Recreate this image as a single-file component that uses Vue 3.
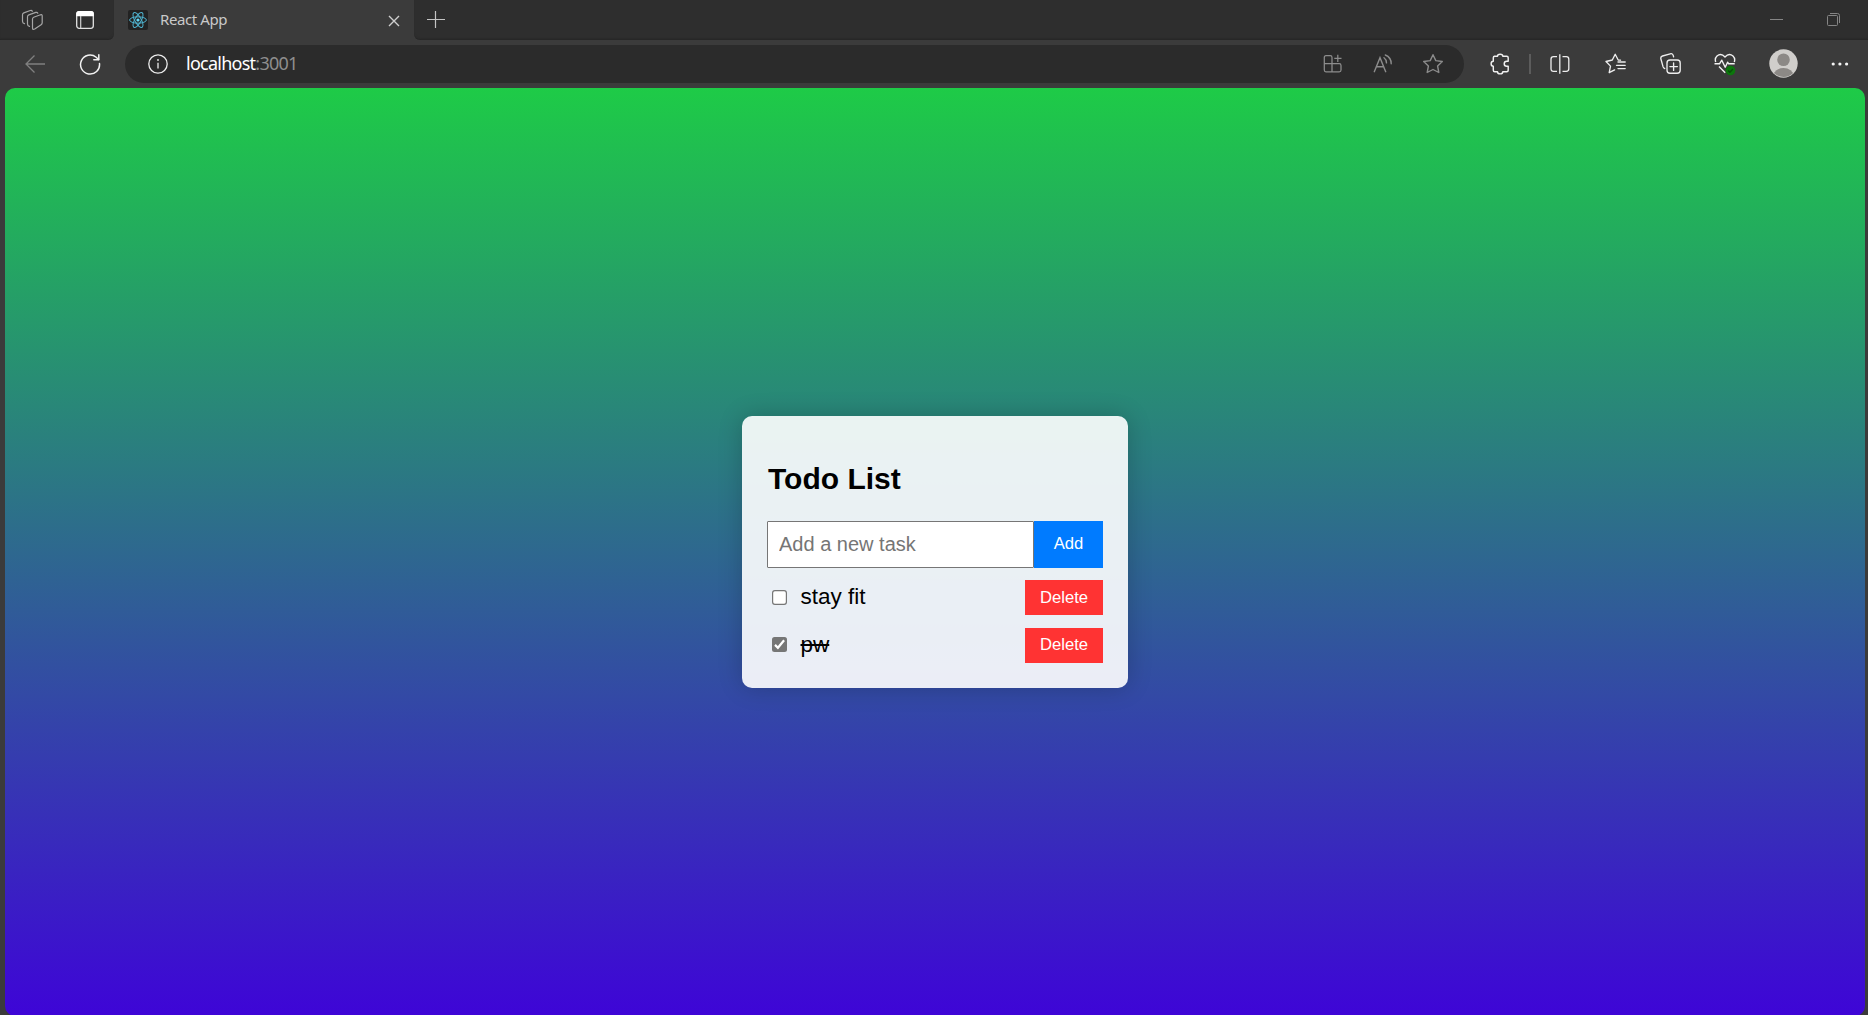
<script setup>
import { ref } from 'vue'

const draft = ref('')
const tasks = ref([
  { id: 1, text: 'stay fit', done: false },
  { id: 2, text: 'pw', done: true },
])

function add() {
  const text = draft.value.trim()
  if (!text) return
  tasks.value.push({ id: Date.now(), text, done: false })
  draft.value = ''
}
function remove(id) {
  tasks.value = tasks.value.filter((t) => t.id !== id)
}
</script>

<template>
  <div class="browser">
    <header class="titlebar">
      <div class="strip left">
        <svg class="workspaces" width="24" height="22" viewBox="0 0 24 22" fill="none" stroke="#a6a6a6" stroke-width="1.2" stroke-linejoin="round" stroke-linecap="round">
          <path d="M12.500 10q0-1.300 1.200-1.800l6.800-2.400q1.700-.5 1.700 1.200v6.700q0 1.300-1.100 2l-6.400 4.300q-2.200 1.200-2.200-1z" />
          <path d="M9.500 17.300q-2-.3-2-2.300V7.800q0-1.400 1.300-1.900l7-2.500q1.500-.4 2 .8" />
          <path d="M4.500 14.600q-2-.3-2-2.300V5.800q0-1.400 1.300-1.900l6.500-2.400q1.500-.4 2 .8" />
        </svg>
        <svg class="tabmenu" width="20" height="20" viewBox="0 0 20 20">
          <rect x="1.700" y="1.700" width="16.600" height="16.600" rx="2.500" fill="none" stroke="#e2e2e2" stroke-width="1.300" />
          <path d="M1.200 6.200V3.800Q1.200 1 4 1h12q2.800 0 2.800 2.800v2.400z" fill="#fff" />
          <path d="M5.700 6v12" stroke="#d0d0d0" stroke-width="1.200" />
        </svg>
      </div>
      <div class="tab">
        <svg class="favicon" width="20" height="20" viewBox="0 0 20 20">
          <rect width="20" height="20" rx="2" fill="#222" />
          <g fill="none" stroke="#4fb3cf" stroke-width="1">
            <ellipse cx="10" cy="10" rx="8.400" ry="3.200" />
            <ellipse cx="10" cy="10" rx="8.400" ry="3.200" transform="rotate(60 10 10)" />
            <ellipse cx="10" cy="10" rx="8.400" ry="3.200" transform="rotate(120 10 10)" />
          </g>
          <circle cx="10" cy="10" r="1.600" fill="#61dafb" />
        </svg>
        <span class="tab-title">React App</span>
        <svg class="close" width="12" height="12" viewBox="0 0 12 12" stroke="#cfcfcf" stroke-width="1.400"><path d="m1 1 10 10M11 1 1 11" /></svg>
      </div>
      <div class="strip right">
        <svg class="plus" width="18" height="18" viewBox="0 0 18 18" stroke="#c4c4c4" stroke-width="1.200"><path d="M0 8.500h18M8.500 0v17" /></svg>
        <svg class="minimize" width="13" height="13" viewBox="0 0 13 13"><path d="M0 6.500h13" stroke="#858585" /></svg>
        <svg class="restore" width="13" height="13" viewBox="0 0 13 13" fill="none" stroke="#858585"><rect x=".5" y="2.500" width="10" height="10" rx="1" /><path d="M3 .5h7.500q2 0 2 2V10" /></svg>
      </div>
    </header>

    <nav class="toolbar">
      <svg class="back" width="20" height="18" viewBox="0 0 20 18" fill="none" stroke="#808080" stroke-width="1.300"><path d="M20 9H1M9.500.500 1 9l8.500 8.500" /></svg>
      <svg class="reload" width="22" height="22" viewBox="0 0 22 22" fill="none" stroke="#f2f2f2" stroke-width="1.500" stroke-linecap="round" stroke-linejoin="round">
        <path d="M20.500 10.500a9.500 9.500 0 1 1-3.300-6.200l2.300 2.200" /><path d="M19.800 1.700v5h-5" />
      </svg>
      <div class="address">
        <svg class="info" width="20" height="20" viewBox="0 0 20 20" fill="none" stroke="#ececec" stroke-width="1.300"><circle cx="10" cy="10" r="9.200" /><path d="M10 8.700v5.800" /><circle cx="10" cy="6" r=".9" fill="#ececec" stroke="none" /></svg>
        <span class="url"><span class="host">localhost</span><span class="port">:3001</span></span>
        <svg class="apps" width="20" height="20" viewBox="0 0 20 20" fill="none" stroke="#8c8c8c" stroke-width="1.250">
          <path d="M9 9.700H1.300V3.500Q1.300 1.700 3 1.700h4.300Q9 1.700 9 3.500v14.300M9 9.700h7.200q1.800 0 1.800 1.800V16q0 1.800-1.800 1.800H3q-1.700 0-1.700-1.800V9.700M14.800.700v7.200M11.300 4.300h7.200" />
        </svg>
        <svg class="read" width="20" height="19" viewBox="0 0 20 19" fill="none" stroke="#8c8c8c" stroke-width="1.400" stroke-linecap="round">
          <path d="M1.300 17.700 7 3.700l5.700 14M3.400 12.800h7.300M11 3.700q2.500 1.800 2.500 5.200M12.300 1q6 2.500 5.900 8.700" />
        </svg>
        <svg class="fav" width="22" height="22" viewBox="0 0 22 22" fill="none" stroke="#8c8c8c" stroke-width="1.400" stroke-linejoin="round">
          <path d="m11 1.700 2.800 5.900 6.500.9-4.700 4.500 1.200 6.500-5.800-3-5.800 3 1.200-6.500-4.700-4.500 6.500-.9z" />
        </svg>
      </div>
      <svg class="puzzle" width="20" height="22" viewBox="0 0 20 22" fill="none" stroke="#f0f0f0" stroke-width="1.450" stroke-linejoin="round">
        <path d="M4.200 3.300h3.300C7.500.500 12.800.500 12.800 3.300h3.900q1.500 0 1.500 1.500v3.500h-1.500c-3.300 0-3.300 5 0 5h1.500v3.900q0 1.500-1.500 1.500h-3.900c0 2.900-5.300 2.900-5.300 0H4.800q-1.500 0-1.500-1.500v-3.900c-2.900 0-2.900-5 0-5V4.800q0-1.500 1.500-1.500z" />
      </svg>
      <span class="divider"></span>
      <svg class="split" width="20" height="20" viewBox="0 0 20 20" fill="none" stroke="#ededed" stroke-width="1.300">
        <path d="M7 17.300H3.500q-2.500 0-2.500-2.500V5.200q0-2.500 2.500-2.500H7M12.500 2.700h3.800q2.500 0 2.500 2.500v9.600q0 2.500-2.500 2.500h-3.800M9.800.300v19.400" />
      </svg>
      <svg class="starlist" width="21" height="21" viewBox="0 0 21 21" fill="none" stroke="#ededed" stroke-width="1.350" stroke-linejoin="round" stroke-linecap="round">
        <path d="M15.500 7.200l-2.300-.2-3-5.700L7.300 7 1 8.500l4.500 4.600-1.300 6.600 5.400-2.800M13 9h7.200M11.500 12.300h8.700M13 15.600h7.200" />
      </svg>
      <svg class="collections" width="21" height="21" viewBox="0 0 21 21" fill="none" stroke="#ededed" stroke-width="1.350" stroke-linejoin="round" stroke-linecap="round">
        <rect x="7" y="7" width="13.200" height="13.200" rx="3" /><path d="M13.600 9.900v7.500M9.900 13.600h7.500M4.700 15.500q-1.200-.4-1.600-1.600L.900 6Q.300 3.700 2.500 3l7.700-2.200q2.300-.6 3 1.600l.4 1.500" />
      </svg>
      <svg class="health" width="22" height="23" viewBox="0 0 22 23" fill="none" stroke="#f2f2f2" stroke-width="1.400" stroke-linejoin="round">
        <path d="M1.700 9Q.500 5.500 3 3q4-3.300 8 .900 4-4.200 8-.900Q21.500 5.500 20.300 9M.500 10.800h5l2.300-3.600 3.400 7 2.400-5 1.100 1.600h6M5 13.600l6.200 6.200" />
        <circle cx="16.500" cy="17.500" r="4.800" fill="#0c760c" stroke="none" /><path d="m14.200 17.600 1.700 1.600 3-3.100" stroke="#064e09" />
      </svg>
      <svg class="avatar" width="29" height="29" viewBox="0 0 29 29">
        <defs><clipPath id="avatar-clip"><circle cx="14.500" cy="14.500" r="13.500" /></clipPath></defs>
        <circle cx="14.500" cy="14.500" r="14.200" fill="#d0cecb" />
        <g clip-path="url(#avatar-clip)" fill="#8c8986"><circle cx="14.500" cy="10.700" r="6.300" /><ellipse cx="14.500" cy="26.500" rx="10" ry="7.500" /></g>
      </svg>
      <svg class="more" width="18" height="4" viewBox="0 0 18 4" fill="#f4f4f4"><circle cx="2.200" cy="2" r="1.600" /><circle cx="8.900" cy="2" r="1.600" /><circle cx="15.600" cy="2" r="1.600" /></svg>
    </nav>

    <main class="page">
      <section class="card">
        <h2>Todo List</h2>
        <form class="entry" @submit.prevent="add">
          <input v-model="draft" type="text" placeholder="Add a new task" />
          <button class="add" type="submit">Add</button>
        </form>
        <ul>
          <li v-for="task in tasks" :key="task.id">
            <label>
              <input v-model="task.done" type="checkbox" />
              <svg class="box" width="15" height="15" viewBox="0 0 15 15">
                <template v-if="task.done">
                  <rect width="15" height="15" rx="2.500" fill="#767676" />
                  <path d="m3 7.900 2.900 2.900 6.200-7.500" fill="none" stroke="#fff" stroke-width="2.200" />
                </template>
                <rect v-else x=".6" y=".6" width="13.800" height="13.800" rx="2.300" fill="#fff" stroke="#767676" stroke-width="1.200" />
              </svg>
              <span class="name" :class="{ done: task.done }">{{ task.text }}</span>
            </label>
            <button class="delete" type="button" @click="remove(task.id)">Delete</button>
          </li>
        </ul>
      </section>
    </main>
  </div>
</template>

<style>
body { margin: 0; overflow: hidden; background: #3b3b3b; }
</style>

<style scoped>
* { box-sizing: border-box; }
svg { display: block; flex: none; }
.browser {
  width: 1868px; height: 1015px; overflow: hidden;
  display: flex; flex-direction: column;
  background: #3b3b3b;
  font-family: "Liberation Sans", Arial, sans-serif;
}
.titlebar { display: flex; height: 40px; flex: none; }
.strip { background: #2e2e2e; display: flex; align-items: flex-start; box-shadow: inset 0 -2px 2px -1px #252525; }
.left { width: 114px; border-bottom-right-radius: 6px; }
.right { flex: 1; border-bottom-left-radius: 6px; }
.workspaces { margin: 9px 0 0 20px; }
.tabmenu { margin: 10px 0 0 31px; }
.tab { width: 300px; display: flex; align-items: flex-start; background: #3b3b3b; }
.favicon { margin: 10px 0 0 14px; }
.tab-title {
  width: 200px; margin: 8px 0 0 12px;
  font: 15px/22px "Noto Sans", sans-serif; letter-spacing: -0.4px; color: #c9c9c9; white-space: nowrap;
}
.close { margin: 15px 0 0 28px; }
.plus { margin: 11px 0 0 13px; }
.minimize { margin: 13px 0 0 auto; }
.restore { margin: 13px 28px 0 44px; }

.toolbar { height: 48px; flex: none; display: flex; align-items: center; padding-bottom: 1px; }
.back { margin-left: 25px; }
.reload { margin-left: 34px; }
.address {
  width: 1339px; height: 38px; margin-left: 24px; border-radius: 19px; background: #2b2b2b;
  display: flex; align-items: center;
}
.info { margin-left: 22.5px; }
.url { width: 1137px; margin: 0 0 2px 18.5px; font: 18px/24px "Noto Sans", sans-serif; letter-spacing: -0.75px; white-space: nowrap; }
.host { color: #fff; }
.port { color: #8e8e8e; }
.read { margin-left: 30px; }
.fav { margin-left: 29px; }
.puzzle { margin-left: 25.5px; }
.divider { width: 2px; height: 20px; margin-left: 19.5px; background: #5c5c5c; }
.split { margin-left: 18.5px; }
.starlist { margin-left: 35px; }
.collections { margin-left: 34px; }
.health { margin: 2px 0 0 33.5px; }
.avatar { margin-left: 32.5px; }
.more { margin-left: 33.5px; }

.page {
  height: 928px; flex: none; margin: 0 3px 0 5px; border-radius: 10px;
  background: linear-gradient(#1ecb47, #3e05d7);
  display: flex; justify-content: center; align-items: flex-start;
}
.card {
  width: 386px; height: 272px; margin-top: 328px; padding: 45px 25px 0;
  border-radius: 10px; background: rgba(255, 255, 255, 0.9);
  box-shadow: 0 0 25px rgba(0, 0, 0, 0.2);
}
h2 { margin: 0 0 0 1px; font-size: 30px; line-height: 36px; color: #000; }
.entry { display: flex; height: 47px; margin-top: 24px; }
.entry input {
  width: 267px; height: 47px; padding: 0 11px; border: 1px solid #767676; border-radius: 1px;
  background: #fff; font: 20px "Liberation Sans", Arial, sans-serif; outline: none;
}
.entry input::placeholder { color: #757575; opacity: 1; }
button { border: 0; padding: 0; color: #fff; font: 16.67px "Liberation Sans", Arial, sans-serif; }
.add { width: 69px; background: #007bff; padding-bottom: 2px; }
ul { list-style: none; margin: 12px 0 0; padding: 0; display: flex; flex-direction: column; gap: 13px; }
li { height: 35px; display: flex; justify-content: space-between; }
label { height: 34px; display: flex; align-items: center; padding-left: 5px; }
li:last-child label { height: 33px; }
li:last-child .delete { padding-bottom: 2px; }
label input { appearance: none; width: 0; height: 0; margin: 0; }
.name { margin-left: 13.5px; font-size: 22.5px; line-height: 26px; color: #000; }
.done { text-decoration: line-through; }
.delete { width: 78px; height: 35px; background: #ff3333; }
</style>
